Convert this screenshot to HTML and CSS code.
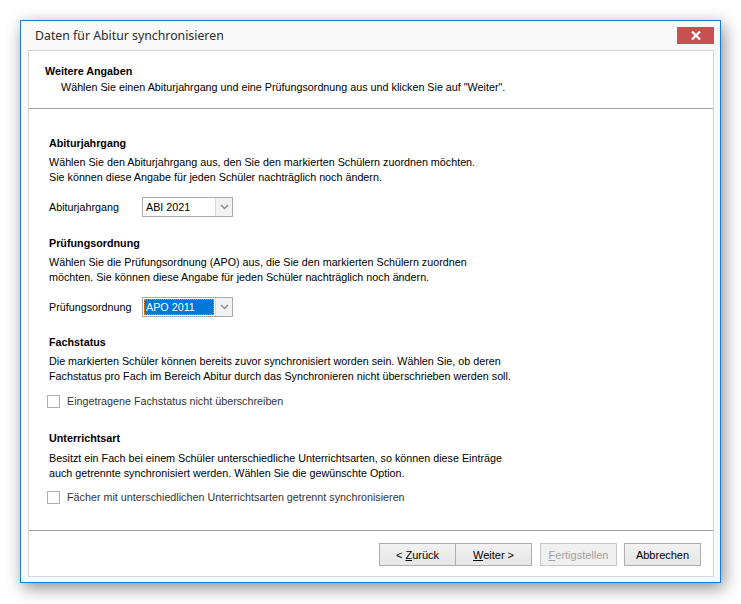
FILE: index.html
```html
<!DOCTYPE html>
<html lang="de">

<head>
    <meta charset="UTF-8">
    <title>Daten für Abitur synchronisieren</title>
    <link rel="stylesheet" href="styles.css">
</head>

<body>
    <div class="window">
        <div class="titlebar">
            <span class="title">Daten für Abitur synchronisieren</span>
            <button class="close">
                <svg width="10" height="9" viewBox="0 0 10 9">
                    <path d="M1 0.5 L9 8.5 M9 0.5 L1 8.5" stroke="#ffffff" stroke-width="2.2" />
                </svg>
            </button>
        </div>
        <div class="panel">
            <div class="header">
                <div class="header-title">Weitere Angaben</div>
                <div class="header-sub">Wählen Sie einen Abiturjahrgang und eine Prüfungsordnung aus und klicken Sie auf "Weiter".</div>
            </div>

            <div class="content">
                <section class="group">
                    <h2>Abiturjahrgang</h2>
                    <p>Wählen Sie den Abiturjahrgang aus, den Sie den markierten Schülern zuordnen möchten.<br>Sie können diese Angabe für jeden Schüler nachträglich noch ändern.</p>
                    <div class="field">
                        <span class="label">Abiturjahrgang</span>
                        <div class="combo">
                            <span class="value">ABI 2021</span>
                            <span class="arrow"><svg width="9" height="6" viewBox="0 0 9 6"><path d="M1 1 L4.5 4.5 L8 1" fill="none" stroke="#8a8a8a" stroke-width="1.4" /></svg></span>
                        </div>
                    </div>
                </section>

                <section class="group group-apo">
                    <h2>Prüfungsordnung</h2>
                    <p>Wählen Sie die Prüfungsordnung (APO) aus, die Sie den markierten Schülern zuordnen<br>möchten. Sie können diese Angabe für jeden Schüler nachträglich noch ändern.</p>
                    <div class="field">
                        <span class="label">Prüfungsordnung</span>
                        <div class="combo focused">
                            <span class="value">APO 2011</span>
                            <span class="arrow"><svg width="9" height="6" viewBox="0 0 9 6"><path d="M1 1 L4.5 4.5 L8 1" fill="none" stroke="#8a8a8a" stroke-width="1.4" /></svg></span>
                        </div>
                    </div>
                </section>

                <section class="group group-status">
                    <h2>Fachstatus</h2>
                    <p>Die markierten Schüler können bereits zuvor synchronisiert worden sein. Wählen Sie, ob deren<br>Fachstatus pro Fach im Bereich Abitur durch das Synchronieren nicht überschrieben werden soll.</p>
                    <label class="check"><span class="box"></span>Eingetragene Fachstatus nicht überschreiben</label>
                </section>

                <section class="group group-art">
                    <h2>Unterrichtsart</h2>
                    <p>Besitzt ein Fach bei einem Schüler unterschiedliche Unterrichtsarten, so können diese Einträge<br>auch getrennte synchronisiert werden. Wählen Sie die gewünschte Option.</p>
                    <label class="check"><span class="box"></span>Fächer mit unterschiedlichen Unterrichtsarten getrennt synchronisieren</label>
                </section>
            </div>

            <div class="buttons">
                <div class="pair">
                    <button class="btn">&lt; <u>Z</u>urück</button>
                    <button class="btn btn-join"><u>W</u>eiter &gt;</button>
                </div>
                <button class="btn" disabled><u>F</u>ertigstellen</button>
                <button class="btn">Abbrechen</button>
            </div>
        </div>
    </div>
</body>

</html>
```

FILE: styles.css
```css
* {
    margin: 0;
    padding: 0;
    box-sizing: border-box;
}

body {
    background-color: #ffffff;
    padding: 20px;
    font-family: 'Liberation Sans', Arial, sans-serif;
    font-size: 10.75px;
    color: #000000;
}

.window {
    width: 701px;
    height: 563px;
    border: 1px solid #1a7bd0;
    background-color: #f9f9f9;
    box-shadow: 3px 5px 16px rgba(0, 0, 0, 0.45);
    display: flex;
    flex-direction: column;
    padding: 0 6px 5px 7px;
}

.titlebar {
    height: 29px;
    display: flex;
    align-items: flex-start;
    justify-content: space-between;
}

.title {
    font-family: 'Noto Sans', 'Open Sans', sans-serif;
    font-size: 12.3px;
    color: #2b2b2b;
    margin-top: 6px;
    margin-left: 7px;
}

.close {
    width: 37px;
    height: 17px;
    margin-top: 6px;
    border: none;
    background-color: #c75050;
    display: flex;
    align-items: center;
    justify-content: center;
}

.panel {
    flex: 1;
    border: 1px solid #d6d6d6;
    background-color: #ffffff;
    display: flex;
    flex-direction: column;
}

.header {
    height: 58px;
    border-bottom: 1px solid #a0a0a0;
    padding: 13px 0 0 16px;
}

.header-title {
    font-weight: bold;
    line-height: 15px;
}

.header-sub {
    line-height: 15px;
    margin-top: 1px;
    padding-left: 16px;
}

.content {
    flex: 1;
    padding: 27px 0 0 20px;
    border-bottom: 1px solid #a0a0a0;
}

.group h2 {
    font-size: 10.75px;
    font-weight: bold;
    line-height: 15px;
}

.group p {
    line-height: 15px;
    margin-top: 4px;
}

.group-apo {
    margin-top: 19px;
}

.group-status {
    margin-top: 18px;
}

.group-art {
    margin-top: 22px;
}

.group-art p {
    margin-top: 5px;
}

.field {
    display: flex;
    align-items: center;
    margin-top: 12px;
    height: 20px;
}

.label {
    width: 93px;
}

.combo {
    width: 91px;
    height: 20px;
    border: 1px solid #a9a9a9;
    display: flex;
    padding: 1px;
}

.value {
    flex: 1;
    padding-left: 2px;
    line-height: 16px;
}

.focused .value {
    background-color: #0078d7;
    color: #ffffff;
    outline: 1px dotted #e08a2a;
    outline-offset: -1px;
    margin-right: 1px;
}

.arrow {
    width: 17px;
    margin: -1px -1px -1px 0;
    border-left: 1px solid #d8d8d8;
    background-color: #f2f2f2;
    display: flex;
    align-items: center;
    justify-content: center;
}

.check {
    display: flex;
    align-items: center;
    margin-top: 10px;
    margin-left: -2px;
    line-height: 15px;
    color: #333333;
}

.group-art .check {
    margin-top: 9px;
}

.box {
    width: 13px;
    height: 13px;
    border: 1px solid #adadad;
    background-color: #ffffff;
    margin-right: 7px;
}

.buttons {
    height: 45px;
    display: flex;
    justify-content: flex-end;
    align-items: flex-start;
    padding: 12px 12px 0 0;
    gap: 7px;
}

.pair {
    display: flex;
    margin-right: 1px;
}

.btn {
    width: 77px;
    height: 23px;
    border: 1px solid #adadad;
    background: linear-gradient(#f2f2f2, #e6e6e6);
    font-family: 'Liberation Sans', Arial, sans-serif;
    font-size: 11px;
    color: #000000;
}

.btn-join {
    margin-left: -1px;
}

.btn:disabled {
    color: #a0a0a0;
    border-color: #c6c6c6;
    background: #f0f0f0;
}
```
